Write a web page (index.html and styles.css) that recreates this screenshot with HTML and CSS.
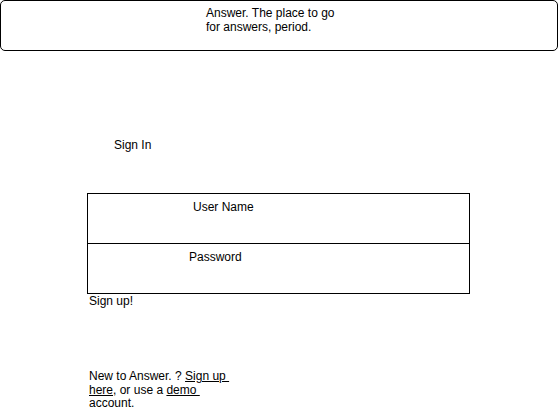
FILE: index.html
```html
<!DOCTYPE html>
<html lang="en">
<head>
<meta charset="utf-8">
<title>Answer - Sign In</title>
<link rel="stylesheet" href="styles.css">
</head>
<body>
<header class="banner">
  <p class="tagline">Answer. The place to go for answers, period.</p>
</header>
<main class="content">
  <h1 class="signin-title">Sign In</h1>
  <form class="login-form">
    <div class="field field-user"><span class="field-label">User Name</span></div>
    <div class="field field-pass"><span class="field-label">Password</span></div>
  </form>
  <p class="signup">Sign up!</p>
  <p class="newto">New to Answer. ? <a class="link" href="#">Sign up&nbsp;<br>here</a>, or use a <a class="link" href="#">demo&nbsp;</a><br>account.</p>
</main>
</body>
</html>
```
FILE: styles.css
```css
html, body {
  margin: 0;
  padding: 0;
  background: #fff;
}
body {
  font-family: "Liberation Sans", Arial, sans-serif;
  font-size: 12px;
  line-height: 14px;
  color: #000;
}
p, h1 {
  margin: 0;
  font-size: 12px;
  font-weight: normal;
}
.banner {
  box-sizing: border-box;
  width: 558px;
  height: 51px;
  border: 1px solid #000;
  border-radius: 5px;
  padding: 5px 0 0 205px;
}
.tagline {
  width: 140px;
}
.signin-title {
  margin-top: 87px;
  padding-left: 114px;
}
.login-form {
  box-sizing: border-box;
  width: 383px;
  margin: 41px 0 0 87px;
  border: 1px solid #000;
}
.field {
  box-sizing: border-box;
  height: 49px;
  padding-top: 6px;
}
.field-user {
  height: 50px;
  border-bottom: 1px solid #000;
  padding-left: 105px;
}
.field-pass {
  padding-left: 101px;
}
.signup {
  padding-left: 89px;
}
.newto {
  margin-top: 62px;
  padding-left: 89px;
  line-height: 13.5px;
}
.link {
  color: #000;
  text-decoration: underline;
}
```
